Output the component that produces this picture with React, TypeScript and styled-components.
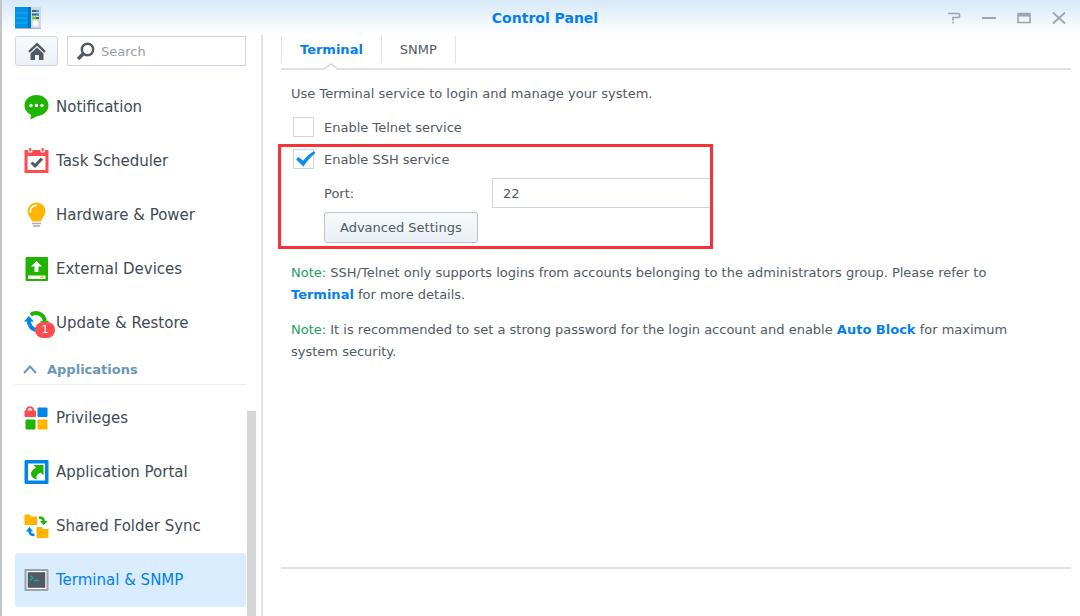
import React, { useId, useState } from 'react';
import styled, { createGlobalStyle, css } from 'styled-components';

const color = {
  text: '#505a64',
  nav: '#414b55',
  blue: '#057feb',
  border: '#cdd6e0',
  rule: '#e1e2e3',
  red: '#ff4b4f',
  green: '#1eb400',
  yellow: '#ffb400',
  icon: '#0086e5',
};

const GlobalStyle = createGlobalStyle`
  *, *::before, *::after { box-sizing: border-box; }
  body { margin: 0; background: #fff; }
  body, button, input {
    font-family: "DejaVu Sans", Verdana, sans-serif;
    font-size: 13px;
    color: ${color.text};
  }
  svg { display: block; flex: none; }
`;

const Window = styled.div`
  display: flex;
  flex-direction: column;
  min-height: 100vh;
  border-left: 2px solid #c4c5c6;
`;

const TitleBar = styled.header`
  display: grid;
  grid-template-columns: 1fr auto 1fr;
  align-items: center;
  height: 35px;
  padding: 0 4px 0 12px;
  background: linear-gradient(#d7e9f9, #fff);
`;

const Title = styled.h1`
  margin: 0;
  font-size: 14px;
  line-height: 22px;
  color: ${color.blue};
`;

const WindowControls = styled.div`
  display: flex;
  justify-content: flex-end;
`;

const WindowButton = styled.button`
  display: flex;
  align-items: center;
  justify-content: center;
  width: 35px;
  height: 34px;
  padding: 0;
  border: 0;
  background: none;
  color: #9ba5ae;
  cursor: pointer;
`;

const Body = styled.div`
  display: flex;
  flex: 1;
`;

const Sidebar = styled.aside`
  display: flex;
  flex: none;
  width: 261px;
  padding: 1px 0 0 13px;
  border-right: 2px solid #e3e4e5;
`;

const SidebarContent = styled.div`
  flex: 1;
  min-width: 0;
`;

const Scrollbar = styled.div`
  display: flex;
  flex: none;
  width: 15px;
  padding: 375px 5px 0 1px;
`;

const ScrollThumb = styled.div`
  flex: 1;
  background: #d3d5d6;
`;

const Tools = styled.div`
  display: flex;
  gap: 9px;
  height: 30px;
  margin-bottom: 14px;
`;

const HomeButton = styled.button`
  display: flex;
  align-items: center;
  justify-content: center;
  flex: none;
  width: 43px;
  padding: 0;
  border: 1px solid ${color.border};
  border-radius: 3px;
  background: linear-gradient(#f7fafd, #edf2f7);
  cursor: pointer;
`;

const SearchBox = styled.label`
  display: flex;
  align-items: center;
  flex: 1;
  min-width: 0;
  gap: 6px;
  padding: 0 8px;
  border: 1px solid ${color.border};
`;

const SearchInput = styled.input`
  flex: 1;
  min-width: 0;
  padding: 0;
  border: 0;
  outline: 0;
  background: none;
  &::placeholder { color: #97a0a9; opacity: 1; }
`;

const NavLink = styled.a<{ $active?: boolean }>`
  display: flex;
  align-items: center;
  gap: 7px;
  height: 54px;
  padding-left: 9px;
  border-radius: 3px;
  font-size: 15px;
  white-space: nowrap;
  text-decoration: none;
  color: ${color.nav};
  ${({ $active }) =>
    $active &&
    css`
      background: #d9edff;
      color: ${color.blue};
    `}
`;

const IconSlot = styled.span`
  position: relative;
  display: block;
`;

const Badge = styled.span`
  position: absolute;
  right: -6px;
  bottom: -2px;
  width: 20px;
  height: 16px;
  border-radius: 8px;
  background: ${color.red};
  color: #fff;
  font-size: 11px;
  line-height: 16px;
  text-align: center;
`;

const GroupHeader = styled.button`
  display: flex;
  align-items: center;
  gap: 10px;
  width: 100%;
  height: 35px;
  margin-bottom: 6px;
  padding: 4px 0 0 8px;
  border: 0;
  border-bottom: 1px solid #e4eef5;
  background: none;
  color: #6a97b8;
  font-weight: bold;
  cursor: pointer;
`;

const Main = styled.main`
  display: flex;
  flex-direction: column;
  flex: 1;
  min-width: 0;
  padding: 1px 9px 0 18px;
`;

const Tabs = styled.div`
  display: flex;
  padding-bottom: 5px;
  border-bottom: 2px solid ${color.rule};
`;

const Tab = styled.button<{ $active?: boolean }>`
  position: relative;
  height: 27px;
  padding: 0 18px;
  border: 0;
  border-right: 1px solid #dbe4ec;
  background: none;
  color: ${({ $active }) => ($active ? color.blue : color.text)};
  font-weight: ${({ $active }) => ($active ? 'bold' : 'normal')};
  cursor: pointer;
  &:first-child { border-left: 1px solid #dbe4ec; }
`;

const TabPointer = styled.svg`
  position: absolute;
  left: 50%;
  top: 100%;
  margin-left: -8px;
`;

const Panel = styled.section`
  flex: 1;
  padding-top: 13px;
`;

const Paragraph = styled.p`
  margin: 0 40px 13px 10px;
  line-height: 22px;
`;

const Intro = styled(Paragraph)`
  margin-bottom: 11px;
`;

const OptionRow = styled.div`
  display: flex;
  align-items: center;
  height: 22px;
  padding-left: 12px;
`;

const CheckLabel = styled.label`
  position: relative;
  display: flex;
  align-items: center;
  gap: 10px;
  cursor: pointer;
`;

const CheckInput = styled.input`
  appearance: none;
  width: 21px;
  height: 20px;
  margin: 0;
  border: 1px solid ${color.border};
  background: #fff;
`;

const CheckMark = styled.svg`
  position: absolute;
  left: 3px;
  top: 2px;
  pointer-events: none;
`;

const Highlight = styled.div`
  display: flex;
  flex-direction: column;
  width: 435px;
  max-width: 100%;
  margin: 6px 0 13px -3px;
  padding: 1px 0 3px;
  border: 3px solid #f63236;
`;

const FieldRow = styled.div`
  display: flex;
  align-items: center;
  padding: 8px 0 4px 43px;
`;

const FieldLabel = styled.label`
  width: 168px;
`;

const TextInput = styled.input`
  flex: 1;
  min-width: 0;
  height: 30px;
  padding: 0 10px;
  border: 1px solid ${color.border};
  border-right: 0;
  border-radius: 0;
  outline: 0;
`;

const PushButton = styled.button`
  align-self: flex-start;
  height: 31px;
  margin-left: 43px;
  padding: 0 15px;
  border: 1px solid #b9c4cf;
  border-radius: 3px;
  background: linear-gradient(#f7fafc, #e9eff5);
  cursor: pointer;
`;

const NoteTag = styled.span`
  color: #1aa05f;
`;

const TextLink = styled.a`
  color: ${color.blue};
  font-weight: bold;
  text-decoration: none;
`;

const Footer = styled.footer`
  height: 49px;
  border-top: 2px solid ${color.rule};
`;

const AppLogo = () => (
  <svg width="28" height="24" viewBox="0 0 28 24">
    <path d="M1 21h26v2H1z" fill="#a3b4bf" />
    <path d="M16 1h11v21H16z" fill="#cdd8df" />
    <path d="M1 1h15v21H1z" fill="#0092e4" />
    <path d="M14 1h3v21h-3z" fill="#0079cc" />
    <path d="M2 7h11M2 12h11M2 17h11" stroke="#22aef2" />
    <path d="M18 5h7M18 8.500h7M20 12h5" stroke="#4d5b66" strokeWidth="2" />
    <path d="M22 5h3M22 8.500h3" stroke="#16a8e8" strokeWidth="2" />
    <path d="M18 12h4" stroke="#7ac51c" strokeWidth="2.500" />
    <circle cx="21.500" cy="17.500" r="3" fill="#fff" />
  </svg>
);

const HomeIcon = () => (
  <svg width="18" height="18" viewBox="0 0 18 18">
    <path d="M1 9.800 9 2.200l8 7.600" fill="none" stroke="#505a64" strokeWidth="2.400" />
    <path d="M9 5.500 15.500 11.500V18H11v-5H7v5H2.500v-6.500z" fill="#505a64" />
  </svg>
);

const SearchIcon = () => (
  <svg width="19" height="19" viewBox="0 0 19 19" fill="none" stroke="#505a64">
    <circle cx="11.500" cy="7.500" r="5.700" strokeWidth="2.400" />
    <path d="M7.500 11.500 2 17" strokeWidth="3.400" />
  </svg>
);

const NotificationIcon = () => (
  <svg width="25" height="26" viewBox="0 0 25 26">
    <path
      d="M12.500 1C5.800 1 .5 5.500.5 11.500c0 4 2.300 7.200 6.500 9.200.2 1.700-.3 3.200-1.200 4.500 2.800-.4 5.400-1.600 7.400-3.200 6.500-.2 11.300-4.800 11.300-10.500C24.500 5.500 19.200 1 12.500 1z"
      fill={color.green}
    />
    <g fill="#fff">
      <circle cx="7" cy="11.500" r="1.700" />
      <circle cx="12.500" cy="11.500" r="1.700" />
      <circle cx="18" cy="11.500" r="1.700" />
    </g>
  </svg>
);

const TaskIcon = () => (
  <svg width="25" height="26" viewBox="0 0 25 26">
    <path d="M.5 2h24v23H.5z" fill={color.red} />
    <path d="M3.500 8h18v14h-18z" fill="#fff" />
    <path d="M4.500 0v2.500a1.700 1.700 0 0 0 3.400 0V0M17 0v2.500a1.700 1.700 0 0 0 3.400 0V0" fill={color.red} stroke="#fff" strokeWidth="1.300" />
    <path d="m7.500 14.500 3.500 3.300 7-7.300" fill="none" stroke="#505a64" strokeWidth="3" />
  </svg>
);

const BulbIcon = () => (
  <svg width="25" height="26" viewBox="0 0 25 26">
    <path d="M12.500.5C7.500.5 3.600 4.400 3.600 9.200c0 4.300 3.400 6.300 4.400 10.300h9c1-4 4.400-6 4.400-10.300C21.400 4.400 17.500.5 12.500.5z" fill={color.yellow} />
    <path d="M6.300 10c0-3.800 2.200-6.200 5.700-6.700" fill="none" stroke="#fff" strokeWidth="1.700" strokeLinecap="round" />
    <path d="M8 21.500h9M9 24h7" stroke="#a3adb6" strokeWidth="1.500" />
  </svg>
);

const ExternalIcon = () => (
  <svg width="25" height="26" viewBox="0 0 25 26">
    <rect x="1.500" y="1" width="22.500" height="24" rx="1" fill={color.green} />
    <path d="M12.500 5 18 10.500h-3.500V16h-4v-5.500H7z" fill="#fff" />
    <path d="M4 19.500h17.500V23H4z" fill="#fff" />
    <path d="M16.500 21.200h3" stroke={color.yellow} strokeWidth="1.500" />
  </svg>
);

const UpdateIcon = () => (
  <svg width="25" height="26" viewBox="0 0 25 26" fill="none" strokeWidth="4">
    <path d="M6.800 4.800A8.800 8.800 0 0 1 20.800 11" stroke={color.green} />
    <path d="M16 11h9l-4 5z" fill={color.green} />
    <path d="M4.800 10.500c0 5 2.300 8 7 9.500" stroke={color.icon} />
    <path d="M0 11.500 4.800 6l5.200 5.500z" fill={color.icon} />
  </svg>
);

const PrivilegesIcon = () => (
  <svg width="25" height="26" viewBox="0 0 25 26">
    <path d="M2.700 8V5.500a3.300 3.300 0 0 1 6.600 0V8" fill="none" stroke={color.red} strokeWidth="2" />
    <rect x=".5" y="5.500" width="11.500" height="6.500" rx="1" fill={color.red} />
    <rect x="13.500" y="2.500" width="10" height="9.500" rx="1" fill={color.icon} />
    <rect x="1.500" y="14.500" width="10" height="10" rx="1" fill={color.green} />
    <rect x="13.500" y="14.500" width="10" height="10" rx="1" fill={color.yellow} />
  </svg>
);

const PortalIcon = () => (
  <svg width="25" height="26" viewBox="0 0 25 26">
    <rect x=".5" y="1" width="24" height="24" rx="1" fill={color.icon} />
    <path d="M4 4.500h17v17H4z" fill="#fff" />
    <path d="M9.500 6h10v10.500l-3-3c-2.500 1-4.500 2.800-4 7-3.500-1-5.500-3.200-5.500-6 0-2.400 1.800-4 5-5.800z" fill={color.green} />
  </svg>
);

const SyncIcon = () => (
  <svg width="25" height="26" viewBox="0 0 25 26">
    <path d="M.5 1.500h5l1.500 2h6V12H.5zM12.500 14h5l1.500 2h5.500v9h-12z" fill={color.yellow} />
    <path d="M15 4.500c3.200 0 4.700 1 4.700 4" fill="none" stroke={color.green} strokeWidth="2.500" />
    <path d="M16 8h7.500l-3.700 4.200z" fill={color.green} />
    <path d="M10.500 22c-3.200 0-5-1-5-4" fill="none" stroke={color.icon} strokeWidth="2.500" />
    <path d="M1.800 18.500h7.400L5.500 14z" fill={color.icon} />
  </svg>
);

const TerminalIcon = () => (
  <svg width="25" height="26" viewBox="0 0 25 26">
    <rect x=".5" y="2" width="24" height="22" rx="1" fill="#98a2ab" />
    <path d="M2.500 4h20v18h-20z" fill="#fff" />
    <path d="M3.700 5.200h17.600v15.600H3.700z" fill="#505a64" />
    <path d="m6 8.500 2.800 2.500L6 13.500M10 13.500h4.500" fill="none" stroke="#0fb0a8" strokeWidth="1.300" />
  </svg>
);

const systemItems = [
  { label: 'Notification', Icon: NotificationIcon },
  { label: 'Task Scheduler', Icon: TaskIcon },
  { label: 'Hardware & Power', Icon: BulbIcon },
  { label: 'External Devices', Icon: ExternalIcon },
  { label: 'Update & Restore', Icon: UpdateIcon, badge: 1 },
];

const applicationItems = [
  { label: 'Privileges', Icon: PrivilegesIcon },
  { label: 'Application Portal', Icon: PortalIcon },
  { label: 'Shared Folder Sync', Icon: SyncIcon },
  { label: 'Terminal & SNMP', Icon: TerminalIcon, active: true },
];

type NavItemProps = { label: string; Icon: () => React.ReactElement; badge?: number; active?: boolean };

const NavItem = ({ label, Icon, badge, active }: NavItemProps) => (
  <NavLink href="#" $active={active} aria-current={active ? 'page' : undefined}>
    <IconSlot>
      <Icon />
      {badge && <Badge>{badge}</Badge>}
    </IconSlot>
    {label}
  </NavLink>
);

const Checkbox = ({ label, initial = false }: { label: string; initial?: boolean }) => {
  const [checked, setChecked] = useState(initial);
  return (
    <OptionRow>
      <CheckLabel>
        <CheckInput type="checkbox" checked={checked} onChange={(e) => setChecked(e.target.checked)} />
        {checked && (
          <CheckMark width="20" height="16" viewBox="0 0 20 16">
            <path d="M0 8.500 2.500 6l4.700 3.700C10.500 5.500 14 2.500 18 .3l1.500 1.700C15 5.500 11 10 7.500 15.500z" fill="#0a8cf0" />
          </CheckMark>
        )}
        {label}
      </CheckLabel>
    </OptionRow>
  );
};

export default function App() {
  const portId = useId();
  return (
    <Window>
      <GlobalStyle />
      <TitleBar>
        <AppLogo />
        <Title>Control Panel</Title>
        <WindowControls>
          <WindowButton aria-label="Help">
            <svg width="14" height="12" viewBox="0 0 14 12" fill="none" stroke="currentColor" strokeWidth="1.700">
              <path d="M1 1.500h10.500q1 0 1 1v2q0 1-1 1H6V8.500M5.100 10.500h1.800" />
            </svg>
          </WindowButton>
          <WindowButton aria-label="Minimize">
            <svg width="14" height="12" viewBox="0 0 14 12" stroke="currentColor" strokeWidth="2">
              <path d="M0 6h14" />
            </svg>
          </WindowButton>
          <WindowButton aria-label="Maximize">
            <svg width="14" height="12" viewBox="0 0 14 12" fill="none" stroke="currentColor">
              <path d="M1 1.500h12v9H1z" strokeWidth="1.600" />
              <path d="M1 3h12" strokeWidth="3" />
            </svg>
          </WindowButton>
          <WindowButton aria-label="Close">
            <svg width="14" height="12" viewBox="0 0 14 12" stroke="currentColor" strokeWidth="1.800">
              <path d="m1 .5 12 11M13 .5l-12 11" />
            </svg>
          </WindowButton>
        </WindowControls>
      </TitleBar>
      <Body>
        <Sidebar>
          <SidebarContent>
            <Tools>
              <HomeButton aria-label="Home">
                <HomeIcon />
              </HomeButton>
              <SearchBox>
                <SearchIcon />
                <SearchInput type="text" placeholder="Search" aria-label="Search" />
              </SearchBox>
            </Tools>
            <nav>
              {systemItems.map((item) => (
                <NavItem key={item.label} {...item} />
              ))}
              <GroupHeader aria-expanded="true">
                <svg width="14" height="10" viewBox="0 0 14 10" fill="none" stroke="currentColor" strokeWidth="2">
                  <path d="m1 9 6-6.500L13 9" />
                </svg>
                Applications
              </GroupHeader>
              {applicationItems.map((item) => (
                <NavItem key={item.label} {...item} />
              ))}
            </nav>
          </SidebarContent>
          <Scrollbar>
            <ScrollThumb />
          </Scrollbar>
        </Sidebar>
        <Main>
          <Tabs role="tablist">
            <Tab role="tab" aria-selected="true" $active>
              Terminal
              <TabPointer width="16" height="7" viewBox="0 0 16 7">
                <path d="M0 7 8 0l8 7z" fill="#fff" />
                <path d="M.5 6.500 8 .8l7.500 5.700" fill="none" stroke="#d9dbdc" strokeWidth="1.500" />
              </TabPointer>
            </Tab>
            <Tab role="tab" aria-selected="false">
              SNMP
            </Tab>
          </Tabs>
          <Panel>
            <Intro>Use Terminal service to login and manage your system.</Intro>
            <Checkbox label="Enable Telnet service" />
            <Highlight>
              <Checkbox label="Enable SSH service" initial />
              <FieldRow>
                <FieldLabel htmlFor={portId}>Port:</FieldLabel>
                <TextInput id={portId} type="text" defaultValue="22" />
              </FieldRow>
              <PushButton>Advanced Settings</PushButton>
            </Highlight>
            <Paragraph>
              <NoteTag>Note:</NoteTag> SSH/Telnet only supports logins from accounts belonging to the administrators
              group. Please refer to <TextLink href="#">Terminal</TextLink> for more details.
            </Paragraph>
            <Paragraph>
              <NoteTag>Note:</NoteTag> It is recommended to set a strong password for the login account and enable{' '}
              <TextLink href="#">Auto Block</TextLink> for maximum system security.
            </Paragraph>
          </Panel>
          <Footer />
        </Main>
      </Body>
    </Window>
  );
}
